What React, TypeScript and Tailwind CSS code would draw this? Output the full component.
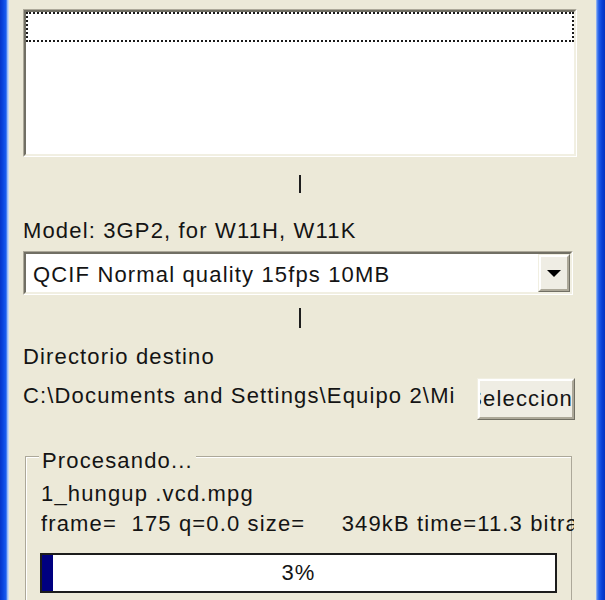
import React from 'react';

const face =
  "font-['Liberation_Sans',Arial,sans-serif] text-[22px] leading-[24px] tracking-[1.15px] text-[#141414]";

// 3D borders in the classic look: sunken for inputs, raised for buttons
const Sunken: React.FC<{ className?: string; children?: React.ReactNode }> = ({ className = '', children }) => (
  <div className={`shrink-0 border border-t-[#aca899] border-l-[#aca899] border-r-white border-b-white ${className}`}>
    <div className="h-full border-2 border-t-[#716f64] border-l-[#716f64] border-r-[#f1efe2] border-b-[#f1efe2] bg-white">
      {children}
    </div>
  </div>
);

const Raised: React.FC<{ className?: string; children?: React.ReactNode }> = ({ className = '', children }) => (
  <div className={`shrink-0 border border-t-[#f1efe2] border-l-[#f1efe2] border-r-[#716f64] border-b-[#716f64] ${className}`}>
    <div className="flex h-full items-center border-2 border-t-white border-l-white border-r-[#aca899] border-b-[#aca899] bg-[#efede4]">
      {children}
    </div>
  </div>
);

const Tick = ({ className = '' }: { className?: string }) => (
  <div className={`mx-auto w-[2px] shrink-0 bg-[#1e1e1e] ${className}`} />
);

export default function App() {
  return (
    <div className="flex h-[600px] w-[605px] overflow-hidden bg-[#ece9d8]">
      <div className="w-[9px] shrink-0 bg-[linear-gradient(to_right,#0633c8_0px,#0a45e0_3px,#1a5cf0_6px,#6f9cf2_7px,#c4d6f7_8px)]" />

      <div className={`flex min-w-0 flex-1 flex-col pl-[14px] pr-[19px] pt-[9px] [&>*]:shrink-0 ${face}`}>
        {/* file list */}
        <Sunken className="h-[148px]">
          <div className="h-[30px] border-2 border-dotted border-[#1a1a1a]" />
        </Sunken>

        <Tick className="mt-[18px] h-[18px]" />

        <div className="mt-[26px]">Model: 3GP2, for W11H, W11K</div>

        {/* profile combo */}
        <Sunken className="mt-[8px] mr-[4px] h-[44px]">
          <div className="flex h-full">
            <div className="flex flex-1 items-center whitespace-nowrap pl-[7px] pt-[4px]">
              QCIF Normal quality 15fps 10MB
            </div>
            <Raised className="h-full w-[32px]">
              <svg viewBox="0 0 14 7" className="mx-auto h-[7px] w-[14px]">
                <polygon points="0,0 14,0 7,7" fill="#000" />
              </svg>
            </Raised>
          </div>
        </Sunken>

        <Tick className="mt-[13px] h-[20px]" />

        <div className="mt-[17px]">Directorio destino</div>

        <div className="mt-[9px] flex items-start">
          <div className="mt-[6px] flex-1 whitespace-nowrap">C:\Documents and Settings\Equipo 2\Mi</div>
          <Raised className="mr-[2px] h-[42px] w-[98px]">
            <div className="flex w-full justify-end overflow-hidden whitespace-nowrap">
              <span className="mr-[-1px]">Seleccion</span>
            </div>
          </Raised>
        </div>

        {/* progress group */}
        <div className="relative mt-[36px] ml-[2px] mr-[5px] h-[200px] border border-[#aca899] shadow-[inset_1px_1px_0_#fff]">
          <div className="absolute left-[13px] top-[-8px] bg-[#ece9d8] px-[3px]">Procesando...</div>
          <div className="pl-[15px] pt-[25px]">
            <div className="whitespace-nowrap">1_hungup .vcd.mpg</div>
            <div className="mt-[6px] mr-[-3px] overflow-hidden whitespace-pre">
              frame=  175 q=0.0 size=     349kB time=11.3 bitrate= 253.2kbits/s
            </div>
            <div className="relative mt-[17px] -ml-px flex h-[40px] w-[517px] border-2 border-[#1c1c1c] bg-white">
              <div className="h-full w-[11px] bg-[#000080]" />
              <div className="absolute inset-0 flex items-center justify-center">3%</div>
            </div>
          </div>
        </div>
      </div>

      <div className="w-[9px] shrink-0 bg-[linear-gradient(to_right,#b8cdf5_0px,#5d8ff0_1px,#1f5ae8_3px,#0a3fd6_6px,#0633c0_9px)]" />
    </div>
  );
}
